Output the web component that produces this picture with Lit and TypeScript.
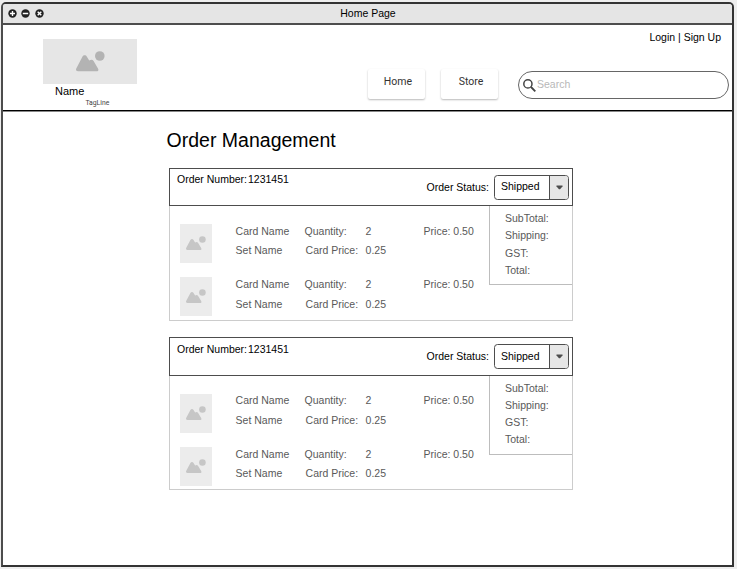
import { LitElement, html, css, svg } from "lit";
import { customElement, property } from "lit/decorators.js";
import { classMap } from "lit/directives/class-map.js";

interface Item { lead: number; gap: number; }
interface Order { number: string; status: string; tall: boolean; items: Item[]; }

const ORDERS: Order[] = [
  { number: "1231451", status: "Shipped", tall: false, items: [{ lead: 0, gap: 3 }, { lead: 0, gap: 4 }] },
  { number: "1231451", status: "Shipped", tall: true, items: [{ lead: -1, gap: 4 }, { lead: 0, gap: 3 }] },
];

@customElement("image-placeholder")
class ImagePlaceholder extends LitElement {
  static styles = css`
    :host { display: flex; align-items: center; justify-content: center; background: #e6e6e6; color: #b3b3b3; }
    svg { display: block; width: var(--glyph, 29px); height: auto; }
  `;
  render() {
    return html`<svg viewBox="0 0 29 21" fill="currentColor">
      <circle cx="23.8" cy="5" r="4.8"></circle>
      <path d="M2 20.3C.2 20.3-.5 18.8.4 17.2L6.4 5.8C7.5 3.9 9.8 3.9 10.9 5.7L13.2 9.6C14.9 8.2 16.6 8.4 17.6 10L22 17.4C22.9 19 22.1 20.3 20.8 20.3Z"></path>
    </svg>`;
  }
}

@customElement("order-card")
class OrderCard extends LitElement {
  @property({ attribute: false }) order!: Order;

  static styles = css`
    :host { display: block; line-height: 16px; }
    .card { width: 404px; }
    .head { box-sizing: border-box; height: 38px; border: 1px solid #4d4d4d; display: flex; justify-content: space-between; padding: 2px 3px 0 7px; }
    .number { display: flex; }
    .number .label { width: 71px; }
    .status { display: flex; align-items: flex-start; gap: 5px; padding-top: 4px; }
    .status .label { padding-top: 4px; }
    .select { box-sizing: border-box; width: 75px; height: 25px; border: 1px solid #4d4d4d; border-radius: 3.5px; display: flex; overflow: hidden; }
    .value { flex: 1; padding: 2px 0 0 6px; }
    .toggle { width: 18px; border-left: 1px solid #4d4d4d; background: #e6e6e6; display: flex; align-items: center; justify-content: center; }
    .toggle svg { width: 7px; height: 5px; display: block; }
    .body { box-sizing: border-box; height: 115px; border: 1px solid #ccc; border-top: 0; display: flex; justify-content: space-between; color: #595959; }
    .items { padding: 18px 0 0 10px; }
    .item { display: flex; gap: 24px; height: 53px; }
    image-placeholder { width: 32px; height: 39px; background: #ececec; color: #c6c6c6; --glyph: 20px; }
    .info { display: grid; grid-template-columns: 69px 61px 58px 52px; align-content: start; margin-left: -0.4px; }
    .unit { padding-left: 1px; }
    .summary { box-sizing: border-box; width: 83px; height: 79px; border: 1px solid #bdbdbd; border-top: 0; border-right: 0; padding: 4px 0 0 15px; line-height: 17.3px; }
    .tall .head { height: 39px; }
    .tall .number { padding-top: 1px; }
    .tall .value { padding-top: 3px; }
    .tall .body { height: 114px; }
    .tall .summary { line-height: 17px; }
  `;

  private item(i: Item) {
    return html`<div class="item">
      <image-placeholder></image-placeholder>
      <div class="info" style="margin-top:${i.lead - 1}px;row-gap:${i.gap}px">
        <span>Card Name</span><span>Quantity:</span><span>2</span><span>Price: 0.50</span>
        <span>Set Name</span><span class="unit">Card Price:</span><span>0.25</span>
      </div>
    </div>`;
  }

  render() {
    const o = this.order;
    return html`<div class=${classMap({ card: true, tall: o.tall })}>
      <div class="head">
        <div class="number"><span class="label">Order Number:</span><span>${o.number}</span></div>
        <div class="status">
          <span class="label">Order Status:</span>
          <div class="select">
            <span class="value">${o.status}</span>
            <span class="toggle"><svg viewBox="0 0 7 5"><path d="M.5.5h6v1L4 4.3H3L.5 1.5Z" fill="#4d4d4d"></path></svg></span>
          </div>
        </div>
      </div>
      <div class="body">
        <div class="items">${o.items.map((i) => this.item(i))}</div>
        <div class="summary">
          <div>SubTotal:</div><div>Shipping:</div><div>GST:</div><div>Total:</div>
        </div>
      </div>
    </div>`;
  }
}

@customElement("app-root")
class AppRoot extends LitElement {
  static styles = css`
    :host { display: block; box-sizing: border-box; height: 569px; padding: 2px 3px 2px 1px; background: #eee; color: #000; font: 10.5px/16px "Liberation Sans", Arial, sans-serif; overflow: hidden; }
    .window { box-sizing: border-box; height: 565px; border: 2px solid #333; border-left-color: #4d4d4d; border-radius: 5px 5px 0 0; background: #fff; display: flex; flex-direction: column; overflow: hidden; }
    .titlebar { box-sizing: border-box; height: 21px; flex: none; background: #e5e5e5; border-bottom: 2px solid #4d4d4d; display: grid; grid-template-columns: 1fr auto 1fr; align-items: start; }
    .controls { display: flex; gap: 4.6px; padding: 4.6px 0 0 4.6px; }
    .controls svg { width: 9px; height: 9px; display: block; }
    .title { padding: 1px 0 0 1px; }
    .header { box-sizing: border-box; height: 86px; flex: none; border-bottom: 1px solid #000; box-shadow: 0 1px 0 #888; display: flex; justify-content: space-between; }
    .brand { padding: 13.5px 0 0 40.4px; width: 93.3px; }
    .brand image-placeholder { width: 93.3px; height: 45.5px; }
    .name { padding-left: 11.6px; line-height: 15px; font-size: 11px; }
    .tagline { padding-left: 42px; font: 6.8px/8px Roboto, sans-serif; color: #444; }
    .tools { display: flex; flex-direction: column; align-items: flex-end; padding: 4px 3px 0 0; }
    .account { padding-right: 8px; }
    .bar { display: flex; padding-top: 24px; }
    .nav { box-sizing: border-box; width: 57px; height: 30px; margin-right: 16px; padding: 5px 0 0 3px; text-align: center; border-radius: 2px; color: #333; box-shadow: 0 1px 2px rgba(0,0,0,.28); font-family: Roboto, sans-serif; }
    .nav.last { margin-right: 20px; }
    .search { box-sizing: border-box; width: 211px; height: 28px; margin-top: 2px; border: 1px solid #666; border-radius: 14px; display: flex; gap: 1px; padding: 4px 0 0 4px; color: #b8b8b8; }
    .search svg { width: 13px; height: 13px; margin-top: 3px; }
    .content { padding: 17px 0 0 166px; }
    h1 { margin: 0 0 16px -2.4px; font-size: 19.5px; font-weight: 400; line-height: 24px; }
    .orders { display: flex; flex-direction: column; gap: 16px; }
    .orders > :last-child { --row-top: 19px; }
  `;

  private control(mark: string) {
    return html`<svg viewBox="0 0 9 9"><circle cx="4.5" cy="4.5" r="4.2" fill="#222"></circle>
      ${svg`<path d=${mark} fill="none" stroke="#fff" stroke-width="1.4"></path>`}</svg>`;
  }

  render() {
    return html`<div class="window">
      <div class="titlebar">
        <div class="controls">
          ${this.control("M2 4.5h5M4.5 2v5")}${this.control("M1.8 4.5h5.4")}${this.control("M2.7 2.7l3.6 3.6M6.3 2.7L2.7 6.3")}
        </div>
        <div class="title">Home Page</div>
      </div>
      <div class="header">
        <div class="brand">
          <image-placeholder></image-placeholder>
          <div class="name">Name</div>
          <div class="tagline">TagLine</div>
        </div>
        <div class="tools">
          <div class="account">Login | Sign Up</div>
          <div class="bar">
            <div class="nav">Home</div>
            <div class="nav last">Store</div>
            <div class="search">
              <svg viewBox="0 0 13 13" fill="none" stroke="#444"><circle cx="4.9" cy="4.9" r="4.1" stroke-width="1.5"></circle><path d="M8 8l4.3 4.3" stroke-width="1.8"></path></svg>
              <span>Search</span>
            </div>
          </div>
        </div>
      </div>
      <div class="content">
        <h1>Order Management</h1>
        <div class="orders">${ORDERS.map((o) => html`<order-card .order=${o}></order-card>`)}</div>
      </div>
    </div>`;
  }
}
